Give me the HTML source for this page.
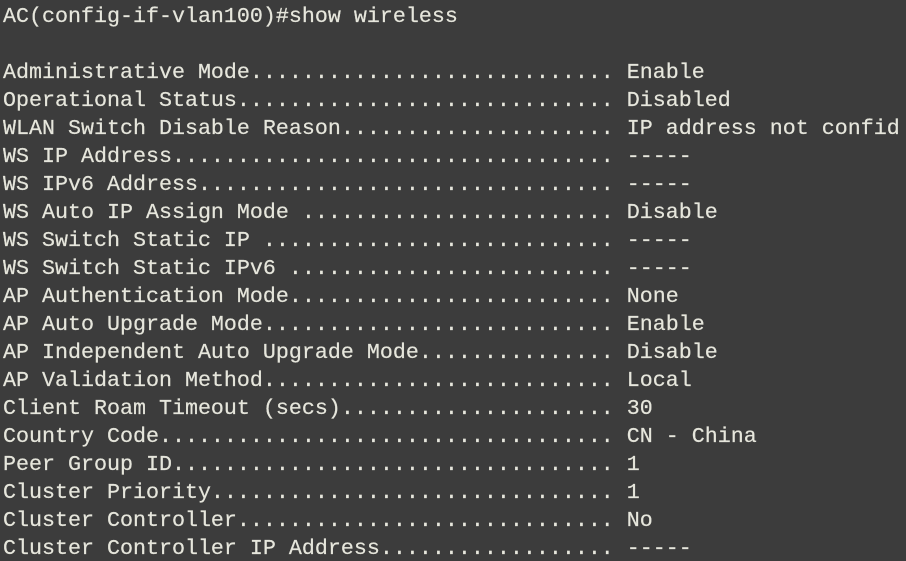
<!DOCTYPE html>
<html><head><meta charset="utf-8"><style>
html,body{margin:0;padding:0;background:#3c3c3c;width:906px;height:561px;overflow:hidden}
pre{margin:0;padding:3px 0 0 3px;font-family:"Liberation Mono",monospace;font-size:21.67px;line-height:28px;color:#e6e6dc;white-space:pre;-webkit-text-stroke:0.2px #e6e6dc}
</style></head><body><pre>AC(config-if-vlan100)#show wireless

Administrative Mode............................ Enable
Operational Status............................. Disabled
WLAN Switch Disable Reason..................... IP address not confid
WS IP Address.................................. -----
WS IPv6 Address................................ -----
WS Auto IP Assign Mode ........................ Disable
WS Switch Static IP ........................... -----
WS Switch Static IPv6 ......................... -----
AP Authentication Mode......................... None
AP Auto Upgrade Mode........................... Enable
AP Independent Auto Upgrade Mode............... Disable
AP Validation Method........................... Local
Client Roam Timeout (secs)..................... 30
Country Code................................... CN - China
Peer Group ID.................................. 1
Cluster Priority............................... 1
Cluster Controller............................. No
Cluster Controller IP Address.................. -----</pre></body></html>
